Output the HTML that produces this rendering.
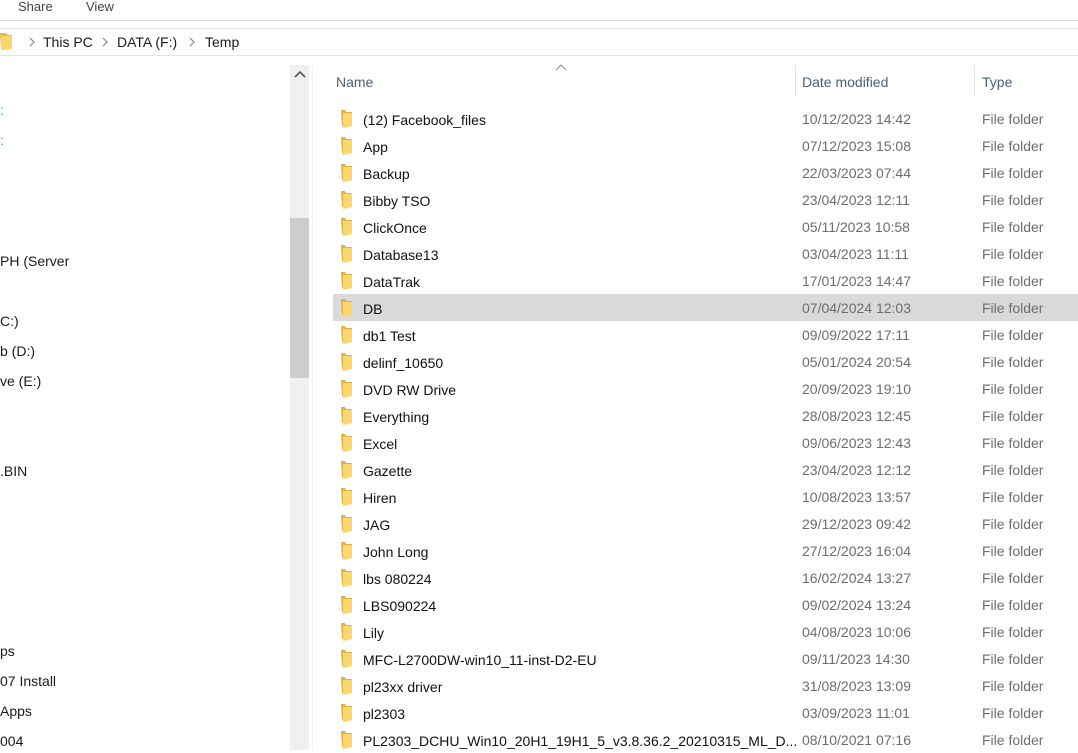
<!DOCTYPE html>
<html><head><meta charset="utf-8"><style>
*{margin:0;padding:0;box-sizing:border-box}
body{width:1078px;height:750px;overflow:hidden;background:#fff;font-family:"Liberation Sans",sans-serif;font-size:14px;color:#1a1a1a;position:relative}
.a{position:absolute;white-space:nowrap}
.row{position:absolute;left:333px;width:745px;height:27px}
.n{position:absolute;left:30px;top:7px;color:#111}
.d{position:absolute;left:469px;top:6px;color:#6d6d6d}
.t{position:absolute;left:649px;top:6px;color:#6d6d6d}
.ic{position:absolute;left:8px;top:5px}
</style></head><body>
<div class="a" style="left:18px;top:-1px;color:#444;font-size:13px">Share</div>
<div class="a" style="left:86px;top:-1px;color:#444;font-size:13px">View</div>
<div class="a" style="left:0;top:20px;width:1078px;height:1px;background:#dadada"></div>
<div class="a" style="left:0;top:28px;width:1078px;height:1px;background:#e3e3e3"></div>
<div class="a" style="left:0;top:55px;width:1078px;height:1px;background:#e3e3e3"></div>
<svg class="a" style="left:0;top:33px" width="14" height="18"><path d="M0 0h6l2 2h4v14H1z" fill="#e8b93c"/><path d="M1 3h11v13L2 17H1z" fill="#fcd46e"/></svg>
<svg class="a" style="left:28px;top:37px" width="8" height="10"><path d="M2 1l4 4-4 4" stroke="#888" stroke-width="1.2" fill="none"/></svg>
<div class="a" style="left:43px;top:34px">This PC</div>
<svg class="a" style="left:101px;top:37px" width="8" height="10"><path d="M2 1l4 4-4 4" stroke="#888" stroke-width="1.2" fill="none"/></svg>
<div class="a" style="left:117px;top:34px">DATA (F:)</div>
<svg class="a" style="left:188px;top:37px" width="8" height="10"><path d="M2 1l4 4-4 4" stroke="#888" stroke-width="1.2" fill="none"/></svg>
<div class="a" style="left:205px;top:34px">Temp</div>

<div class="a" style="left:0;top:102px;color:#3aa0f0">:</div>
<div class="a" style="left:0;top:132px;color:#3aa0f0">:</div>
<div class="a" style="left:0;top:253px">PH (Server</div>
<div class="a" style="left:0;top:313px">C:)</div>
<div class="a" style="left:0;top:343px">b (D:)</div>
<div class="a" style="left:0;top:373px">ve (E:)</div>
<div class="a" style="left:0;top:463px">.BIN</div>
<div class="a" style="left:0;top:643px">ps</div>
<div class="a" style="left:0;top:673px">07 Install</div>
<div class="a" style="left:0;top:703px">Apps</div>
<div class="a" style="left:0;top:733px">004</div>

<div class="a" style="left:290px;top:65px;width:19px;height:685px;background:#f0f0f0"></div>
<div class="a" style="left:290px;top:218px;width:19px;height:160px;background:#cdcdcd"></div>
<svg class="a" style="left:294px;top:70px" width="12" height="10"><path d="M1 7l5-5 5 5" stroke="#555" stroke-width="1.6" fill="none"/></svg>
<div class="a" style="left:312px;top:65px;width:1px;height:685px;background:#f0f0f0"></div>

<div class="a" style="left:336px;top:74px;color:#4c607a">Name</div>
<svg class="a" style="left:555px;top:64px" width="12" height="7"><path d="M1 6l5-5 5 5" stroke="#888" stroke-width="1" fill="none"/></svg>
<div class="a" style="left:795px;top:65px;width:1px;height:32px;background:#e5e5e5"></div>
<div class="a" style="left:802px;top:74px;color:#4c607a">Date modified</div>
<div class="a" style="left:974px;top:65px;width:1px;height:32px;background:#e5e5e5"></div>
<div class="a" style="left:982px;top:74px;color:#4c607a">Type</div>

<div id="rows"></div>
<script>
var r=[["(12) Facebook_files","10/12/2023 14:42"],["App","07/12/2023 15:08"],["Backup","22/03/2023 07:44"],["Bibby TSO","23/04/2023 12:11"],["ClickOnce","05/11/2023 10:58"],["Database13","03/04/2023 11:11"],["DataTrak","17/01/2023 14:47"],["DB","07/04/2024 12:03"],["db1 Test","09/09/2022 17:11"],["delinf_10650","05/01/2024 20:54"],["DVD RW Drive","20/09/2023 19:10"],["Everything","28/08/2023 12:45"],["Excel","09/06/2023 12:43"],["Gazette","23/04/2023 12:12"],["Hiren","10/08/2023 13:57"],["JAG","29/12/2023 09:42"],["John Long","27/12/2023 16:04"],["lbs 080224","16/02/2024 13:27"],["LBS090224","09/02/2024 13:24"],["Lily","04/08/2023 10:06"],["MFC-L2700DW-win10_11-inst-D2-EU","09/11/2023 14:30"],["pl23xx driver","31/08/2023 13:09"],["pl2303","03/09/2023 11:01"],["PL2303_DCHU_Win10_20H1_19H1_5_v3.8.36.2_20210315_ML_D...","08/10/2021 07:16"]];
var h="";
r.forEach(function(x,i){
h+='<div class="row" style="top:'+(105+27*i)+'px;'+(i==7?'background:#d9d9d9':'')+'"><svg class="ic" width="13" height="18"><path d="M0 0h4l1 2h6v14H1z" fill="#e3b23a"/><path d="M2 3h9v13L3 18H2z" fill="#fcd66f"/></svg><span class="n">'+x[0]+'</span><span class="d">'+x[1]+'</span><span class="t">File folder</span></div>';
});
document.getElementById("rows").innerHTML=h;
</script>
</body></html>
